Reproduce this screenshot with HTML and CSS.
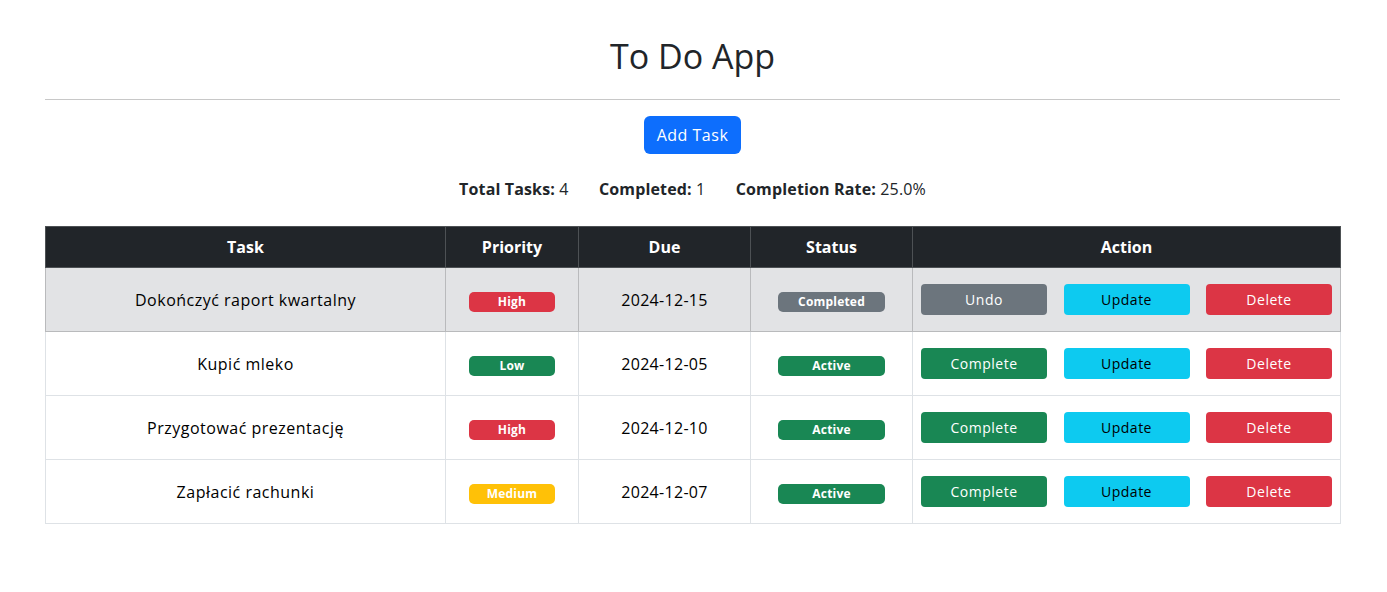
FILE: index.html
```html
<!DOCTYPE html>
<html lang="pl">
<head>
<meta charset="utf-8">
<title>To Do App</title>
<link rel="stylesheet" href="styles.css">
</head>
<body>
<div class="container">
  <h1 class="title">To Do App</h1>
  <hr class="divider">
  <div class="add-wrap"><button class="btn btn-primary">Add Task</button></div>
  <p class="stats">
    <span class="stat"><b>Total Tasks:</b> 4</span>
    <span class="stat"><b>Completed:</b> 1</span>
    <span class="stat"><b>Completion Rate:</b> 25.0%</span>
  </p>
  <table class="tasks">
    <thead>
      <tr>
        <th class="c-task">Task</th>
        <th class="c-prio">Priority</th>
        <th class="c-due">Due</th>
        <th class="c-status">Status</th>
        <th class="c-action">Action</th>
      </tr>
    </thead>
    <tbody>
      <tr class="done">
        <td class="task">Dokończyć raport kwartalny</td>
        <td><span class="badge bg-danger">High</span></td>
        <td class="date">2024-12-15</td>
        <td><span class="badge bg-secondary">Completed</span></td>
        <td><div class="actions"><button class="btn btn-sm btn-secondary">Undo</button><button class="btn btn-sm btn-info">Update</button><button class="btn btn-sm btn-danger">Delete</button></div></td>
      </tr>
      <tr>
        <td class="task">Kupić mleko</td>
        <td><span class="badge bg-success">Low</span></td>
        <td class="date">2024-12-05</td>
        <td><span class="badge bg-success">Active</span></td>
        <td><div class="actions"><button class="btn btn-sm btn-success">Complete</button><button class="btn btn-sm btn-info">Update</button><button class="btn btn-sm btn-danger">Delete</button></div></td>
      </tr>
      <tr>
        <td class="task">Przygotować prezentację</td>
        <td><span class="badge bg-danger">High</span></td>
        <td class="date">2024-12-10</td>
        <td><span class="badge bg-success">Active</span></td>
        <td><div class="actions"><button class="btn btn-sm btn-success">Complete</button><button class="btn btn-sm btn-info">Update</button><button class="btn btn-sm btn-danger">Delete</button></div></td>
      </tr>
      <tr>
        <td class="task">Zapłacić rachunki</td>
        <td><span class="badge bg-warning">Medium</span></td>
        <td class="date">2024-12-07</td>
        <td><span class="badge bg-success">Active</span></td>
        <td><div class="actions"><button class="btn btn-sm btn-success">Complete</button><button class="btn btn-sm btn-info">Update</button><button class="btn btn-sm btn-danger">Delete</button></div></td>
      </tr>
    </tbody>
  </table>
</div>
</body>
</html>
```
FILE: styles.css
```css
* { box-sizing: border-box; }
body {
  margin: 0;
  font-family: "Open Sans", "Noto Sans", sans-serif;
  font-size: 16px;
  line-height: 1.5;
  color: #212529;
  background: #fff;
}
.container {
  width: 1295px;
  margin: 0 0 0 45px;
  padding-top: 36px;
}
.title {
  margin: 0;
  text-align: center;
  font-size: 34px;
  font-weight: 500;
  line-height: 41px;
}
.divider {
  margin: 22px 0 16px;
  border: 0;
  border-top: 1px solid #c8c8c8;
}
.add-wrap { text-align: center; }
.btn {
  font-family: inherit;
  border: 1px solid transparent;
  border-radius: 6px;
  color: #fff;
  cursor: pointer;
  letter-spacing: 0.5px;
}
.btn-primary {
  background: #0d6efd;
  font-size: 16px;
  line-height: 24px;
  padding: 6px 12px;
  height: 38px;
}
.stats {
  margin: 23px 0 25px;
  text-align: center;
  font-size: 16px;
  line-height: 24px;
  letter-spacing: 0.15px;
}
.stat { margin: 0 13px; }
.stat b { font-weight: 700; }
.tasks {
  width: 100%;
  border-collapse: collapse;
  table-layout: fixed;
  color: #000;
}
.tasks th, .tasks td {
  text-align: center;
  vertical-align: middle;
  border: 1px solid #dee2e6;
}
.tasks th {
  background: #212529;
  color: #fff;
  border-color: #4d5154;
  font-weight: 700;
  height: 41px;
  padding: 8px;
}
.tasks td {
  height: 64px;
  padding: 8px;
}
.tasks td.task { letter-spacing: 0.5px; }
.tasks td.date { letter-spacing: 0.3px; }
.c-task { width: 400px; }
.c-prio { width: 133px; }
.c-due { width: 172px; }
.c-status { width: 162px; }
.c-action { width: 428px; }
.tasks tr.done td {
  background: #e2e3e5;
  border-color: #b9babc;
}
.badge {
  display: inline-block;
  width: 73.5%;
  height: 20px;
  line-height: 20px;
  border-radius: 5px;
  color: #fff;
  font-size: 12px;
  font-weight: 700;
  letter-spacing: 0.2px;
}
.bg-danger { background: #dc3545; }
.bg-success { background: #198754; }
.bg-secondary { background: #6c757d; }
.bg-warning { background: #ffc107; }
.actions {
  display: flex;
  justify-content: space-between;
}
.btn-sm {
  width: 126px;
  height: 31px;
  font-size: 14px;
  line-height: 21px;
  padding: 4px 8px;
  border-radius: 4px;
}
.btn-secondary { background: #6c757d; }
.btn-info { background: #0dcaf0; color: #000; }
.btn-danger { background: #dc3545; }
.btn-success { background: #198754; }
```
